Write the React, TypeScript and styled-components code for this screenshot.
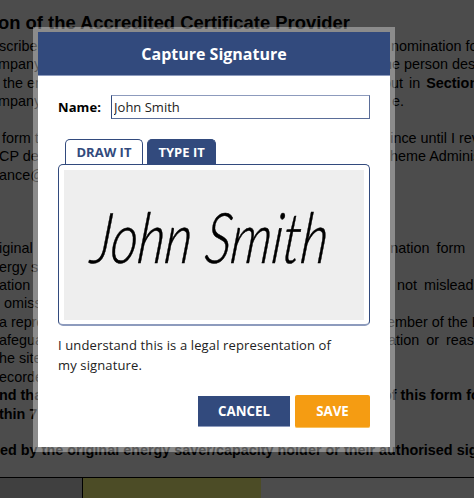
import styled, { createGlobalStyle } from 'styled-components'

const GlobalStyle = createGlobalStyle`
    html, body {
        margin: 0;
        height: 100%;
        overflow: hidden;
        background: #fff;
    }
    * {
        box-sizing: border-box;
    }
`

const Page = styled.div`
    width: 474px;
    height: 498px;
    overflow: hidden;
    padding-top: 11px;
    font-family: 'Liberation Sans', Arial, sans-serif;
    font-size: 14.4px;
    color: #000;
`

const Heading = styled.h2`
    margin: 0 0 2px;
    font-size: 18.4px;
    line-height: 24px;
    font-weight: 700;
    white-space: nowrap;
    text-indent: -2px;
`

const Paragraph = styled.div<{ $gap?: number }>`
    margin-bottom: ${(p) => p.$gap ?? 0}px;
`

const Row = styled.div<{ $bold?: boolean }>`
    display: flex;
    height: 18.4px;
    line-height: 18.4px;
    white-space: nowrap;
    font-weight: ${(p) => (p.$bold ? 700 : 400)};
`

const Before = styled.span<{ $indent: number }>`
    flex: none;
    width: 200px;
    overflow: hidden;
    text-indent: ${(p) => p.$indent}px;
`

const After = styled.span<{ $at: number; $spread?: number }>`
    flex: none;
    margin-left: ${(p) => p.$at - 200}px;
    word-spacing: ${(p) => p.$spread ?? 0}px;
`

const Table = styled.div`
    display: flex;
    height: 22px;
    margin-top: 17px;
    border-top: 1px solid #000;
`

const Cell = styled.div<{ $width?: number; $tone: string }>`
    flex: ${(p) => (p.$width ? `0 0 ${p.$width}px` : '1')};
    background: ${(p) => p.$tone};
    border-right: ${(p) => (p.$width === 83 ? '1px solid #000' : '0')};
`

const Overlay = styled.div`
    position: fixed;
    inset: 0;
    background: rgba(0, 0, 0, 0.7);
`

const Modal = styled.div`
    position: fixed;
    left: 33px;
    top: 27px;
    width: 362px;
    height: 425px;
    border: 5px solid rgba(255, 255, 255, 0.35);
    background: #fff;
    background-clip: padding-box;
    font-family: 'Open Sans', sans-serif;
    color: #222;
`

const ModalHeader = styled.div`
    height: 44px;
    display: flex;
    align-items: center;
    justify-content: center;
    background: #324a7d;
    border-bottom: 1px solid #8d9bbd;
    color: #fff;
    font-size: 16px;
    font-weight: 700;
`

const ModalBody = styled.div`
    padding: 19px 20px 0;
`

const NameRow = styled.div`
    display: flex;
    align-items: center;
    gap: 10px;
    height: 24px;
`

const NameLabel = styled.label`
    font-size: 13px;
    font-weight: 700;
    color: #000;
    letter-spacing: 0.1px;
`

const NameInput = styled.input`
    flex: 1;
    min-width: 0;
    height: 24px;
    padding: 0 2px 1px 2px;
    border: 1px solid #324a7d;
    border-top-color: #8d9bbd;
    border-right-color: #5a6d98;
    border-bottom-color: #5a6d98;
    border-radius: 0;
    outline: none;
    font-family: 'Open Sans', sans-serif;
    font-size: 13px;
    color: #222;
`

const Tabs = styled.div`
    display: flex;
    gap: 4px;
    margin: 20px 0 0 7px;
`

const Tab = styled.div<{ $active?: boolean }>`
    height: 25px;
    padding: 0 10.5px 1px;
    display: flex;
    align-items: center;
    border: 1px solid #324a7d;
    border-bottom: 0;
    border-radius: 5px 5px 0 0;
    background: ${(p) => (p.$active ? '#324a7d' : '#fff')};
    color: ${(p) => (p.$active ? '#fff' : '#324a7d')};
    font-size: 13px;
    font-weight: 700;
`

const SignaturePanel = styled.div`
    height: 162px;
    padding: 5px;
    border: 1px solid #324a7d;
    border-bottom: 2px solid #8d9bbd;
    border-radius: 5px;
`

const SignatureArea = styled.div`
    height: 150px;
    display: flex;
    align-items: center;
    justify-content: center;
    overflow: hidden;
    background: #eee;
`

const SignatureText = styled.div`
    font-family: Lato, 'Open Sans', sans-serif;
    font-style: italic;
    font-weight: 300;
    font-size: 70px;
    line-height: 1;
    color: #000;
    white-space: nowrap;
    transform: translate(-3px, -9px) scaleX(0.75) skewX(-8deg);
    -webkit-text-stroke: 0.5px #000;
`

const Notice = styled.p`
    margin: 9px 0 0;
    width: 285px;
    font-size: 13px;
    line-height: 20px;
    letter-spacing: 0.13px;
    color: #222;
`

const Actions = styled.div`
    display: flex;
    justify-content: flex-end;
    align-items: center;
    gap: 5px;
    margin-top: 20px;
`

const ActionButton = styled.button<{ $primary?: boolean }>`
    height: ${(p) => (p.$primary ? 33 : 31)}px;
    width: ${(p) => (p.$primary ? 75 : 92)}px;
    padding: 0;
    border: 0;
    border-radius: ${(p) => (p.$primary ? 2 : 0)}px;
    border-bottom: 1px solid ${(p) => (p.$primary ? '#f8c15f' : '#8d9bbd')};
    background: ${(p) => (p.$primary ? '#f59c12' : '#324a7d')};
    color: #fff;
    font-family: 'Open Sans', sans-serif;
    font-size: 13.3px;
    font-weight: 700;
`

const backdropLines = [
    { before: 'scribed', indent: -1, after: 'nomination for', at: 391 },
    { before: 'mpany', indent: -2, after: 'the person described', at: 380 },
    { before: 'the energy', indent: 3, after: 'out in', at: 383, bold: 'Section' },
    { before: 'mpany', indent: -2, after: 'e.', at: 392 },
]

export default function App() {
    return (
        <>
            <GlobalStyle />
            <Page>
                <Heading>on of the Accredited Certificate Provider</Heading>
                <Paragraph $gap={18.4}>
                    {backdropLines.map((line) => (
                        <Row key={line.before + line.after}>
                            <Before $indent={line.indent}>{line.before}</Before>
                            <After $at={line.at} $spread={line.bold ? 2 : 0}>
                                {line.after} {line.bold && <b>{line.bold}</b>}
                            </After>
                        </Row>
                    ))}
                </Paragraph>
                <Paragraph $gap={55}>
                    <Row>
                        <Before $indent={2}>form to</Before>
                        <After $at={383}>since until I revoke</After>
                    </Row>
                    <Row>
                        <Before $indent={-1}>CP designated</Before>
                        <After $at={390}>heme Administrator</After>
                    </Row>
                    <Row>
                        <Before $indent={-1}>ance@</Before>
                    </Row>
                </Paragraph>
                <Paragraph $gap={18.4}>
                    <Row>
                        <Before $indent={-1}>iginal</Before>
                        <After $at={387} $spread={3}>ination form</After>
                    </Row>
                    <Row>
                        <Before $indent={-1}>ergy saver</Before>
                    </Row>
                    <Row>
                        <Before $indent={-1}>ation</Before>
                        <After $at={397} $spread={3}>not misleading</After>
                    </Row>
                    <Row>
                        <Before $indent={4}>omissions</Before>
                    </Row>
                    <Row>
                        <Before $indent={-1}>a representative</Before>
                        <After $at={387}>ember of the Board</After>
                    </Row>
                    <Row>
                        <Before $indent={-1}>afeguard</Before>
                        <After $at={388} $spread={3}>ation or reason</After>
                    </Row>
                    <Row>
                        <Before $indent={-1}>he site</Before>
                    </Row>
                    <Row>
                        <Before $indent={-1}>ecorded</Before>
                    </Row>
                    <Row $bold>
                        <Before $indent={-1}>nd that</Before>
                        <After $at={383}>of this form for</After>
                    </Row>
                    <Row $bold>
                        <Before $indent={-1}>thin 7</Before>
                    </Row>
                </Paragraph>
                <Row $bold>ed by the original energy saver/capacity holder or their authorised signatory</Row>
                <Table>
                    <Cell $width={83} $tone="#d5d5d5" />
                    <Cell $width={178} $tone="#fdfd7f" />
                    <Cell $tone="#fff" />
                </Table>
            </Page>
            <Overlay />
            <Modal>
                <ModalHeader>Capture Signature</ModalHeader>
                <ModalBody>
                    <NameRow>
                        <NameLabel htmlFor="signer">Name:</NameLabel>
                        <NameInput id="signer" defaultValue="John Smith" />
                    </NameRow>
                    <Tabs>
                        <Tab>DRAW IT</Tab>
                        <Tab $active>TYPE IT</Tab>
                    </Tabs>
                    <SignaturePanel>
                        <SignatureArea>
                            <SignatureText>John Smith</SignatureText>
                        </SignatureArea>
                    </SignaturePanel>
                    <Notice>I understand this is a legal representation of my signature.</Notice>
                    <Actions>
                        <ActionButton>CANCEL</ActionButton>
                        <ActionButton $primary>SAVE</ActionButton>
                    </Actions>
                </ModalBody>
            </Modal>
        </>
    )
}
